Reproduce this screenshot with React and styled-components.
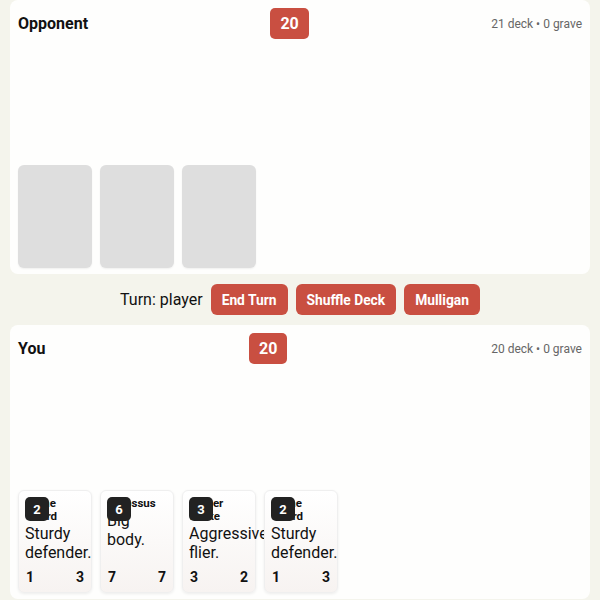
import React from 'react';
import styled, { createGlobalStyle } from 'styled-components';

const GlobalStyle = createGlobalStyle`
  html, body {
    margin: 0;
    padding: 0;
    background: #f4f4ec;
    font-family: Roboto, "Liberation Sans", sans-serif;
    color: #111;
  }
`;

const opponent = { name: 'Opponent', life: 20, deck: 21, grave: 0, hand: 3 };

const playerHand = [
  { id: 1, name: 'Stone Guard', cost: 2, text: 'Sturdy defender.', atk: 1, hp: 3 },
  { id: 2, name: 'Colossus', cost: 6, text: 'Big body.', atk: 7, hp: 7 },
  { id: 3, name: 'Ember Drake', cost: 3, text: 'Aggressive flier.', atk: 3, hp: 2 },
  { id: 4, name: 'Stone Guard', cost: 2, text: 'Sturdy defender.', atk: 1, hp: 3 },
];

const Page = styled.div`
  display: flex;
  flex-direction: column;
  gap: 10px;
  padding: 0 10px 6px;
`;

const Panel = styled.section`
  display: flex;
  flex-direction: column;
  background: #fefefd;
  border-radius: 8px;
  padding: 8px 8px 6px;
`;

const Header = styled.div`
  display: flex;
  align-items: center;
  justify-content: space-between;
  height: 31px;
`;

const Title = styled.h2`
  margin: 0;
  font-size: 16px;
  font-weight: 700;
`;

const Life = styled.div`
  background: #c94f41;
  color: #fff;
  font-weight: 700;
  font-size: 16px;
  height: 31px;
  line-height: 31px;
  padding: 0 10px;
  border-radius: 5px;
`;

const Counts = styled.div`
  font-size: 12px;
  color: #666;
`;

const Board = styled.div`
  height: 110px;
  margin: 8px 0;
`;

const Hand = styled.div`
  display: flex;
  gap: 8px;
`;

const CardBack = styled.div`
  width: 74px;
  height: 103px;
  border-radius: 6px;
  background: #dedede;
  box-shadow: 0 1px 2px rgba(0, 0, 0, 0.06);
`;

const Card = styled.div`
  position: relative;
  box-sizing: border-box;
  width: 74px;
  height: 103px;
  padding: 6px;
  display: flex;
  flex-direction: column;
  border: 1px solid #efefef;
  border-radius: 6px;
  background: linear-gradient(#ffffff, #f7f3f1);
  box-shadow: 0 1px 3px rgba(0, 0, 0, 0.07);
`;

const Cost = styled.div`
  position: absolute;
  top: 6px;
  left: 6px;
  width: 24px;
  height: 24px;
  border-radius: 5px;
  background: #222;
  color: #fff;
  font-size: 13px;
  font-weight: 700;
  display: flex;
  align-items: center;
  justify-content: center;
`;

const CardName = styled.div`
  font-size: 11.5px;
  font-weight: 700;
  line-height: 13px;
  padding-left: 1px;
`;

const CardText = styled.div`
  font-size: 16px;
  line-height: 19px;
  margin-top: 1px;
`;

const Stats = styled.div`
  margin-top: auto;
  display: flex;
  justify-content: space-between;
  font-size: 14px;
  font-weight: 700;
  padding: 0 1px 1px;
`;

const Controls = styled.div`
  display: flex;
  align-items: center;
  justify-content: center;
  gap: 8px;
  height: 31px;
`;

const TurnLabel = styled.span`
  font-size: 16px;
`;

const Button = styled.button`
  height: 31px;
  padding: 0 11px;
  border: 0;
  border-radius: 6px;
  background: #c94f41;
  color: #fff;
  font-family: inherit;
  font-size: 13.8px;
  font-weight: 700;
  cursor: pointer;
`;

function PlayerHeader({ title, life, deck, grave }) {
  return (
    <Header>
      <Title>{title}</Title>
      <Life>{life}</Life>
      <Counts>
        {deck} deck • {grave} grave
      </Counts>
    </Header>
  );
}

export default function App() {
  return (
    <>
      <GlobalStyle />
      <Page>
        <Panel>
          <PlayerHeader title={opponent.name} life={opponent.life} deck={opponent.deck} grave={opponent.grave} />
          <Board />
          <Hand>
            {Array.from({ length: opponent.hand }).map((_, i) => (
              <CardBack key={i} />
            ))}
          </Hand>
        </Panel>

        <Controls>
          <TurnLabel>Turn: player</TurnLabel>
          <Button>End Turn</Button>
          <Button>Shuffle Deck</Button>
          <Button>Mulligan</Button>
        </Controls>

        <Panel>
          <PlayerHeader title="You" life={20} deck={20} grave={0} />
          <Board />
          <Hand>
            {playerHand.map((c) => (
              <Card key={c.id}>
                <Cost>{c.cost}</Cost>
                <CardName>{c.name}</CardName>
                <CardText>{c.text}</CardText>
                <Stats>
                  <span>{c.atk}</span>
                  <span>{c.hp}</span>
                </Stats>
              </Card>
            ))}
          </Hand>
        </Panel>
      </Page>
    </>
  );
}
